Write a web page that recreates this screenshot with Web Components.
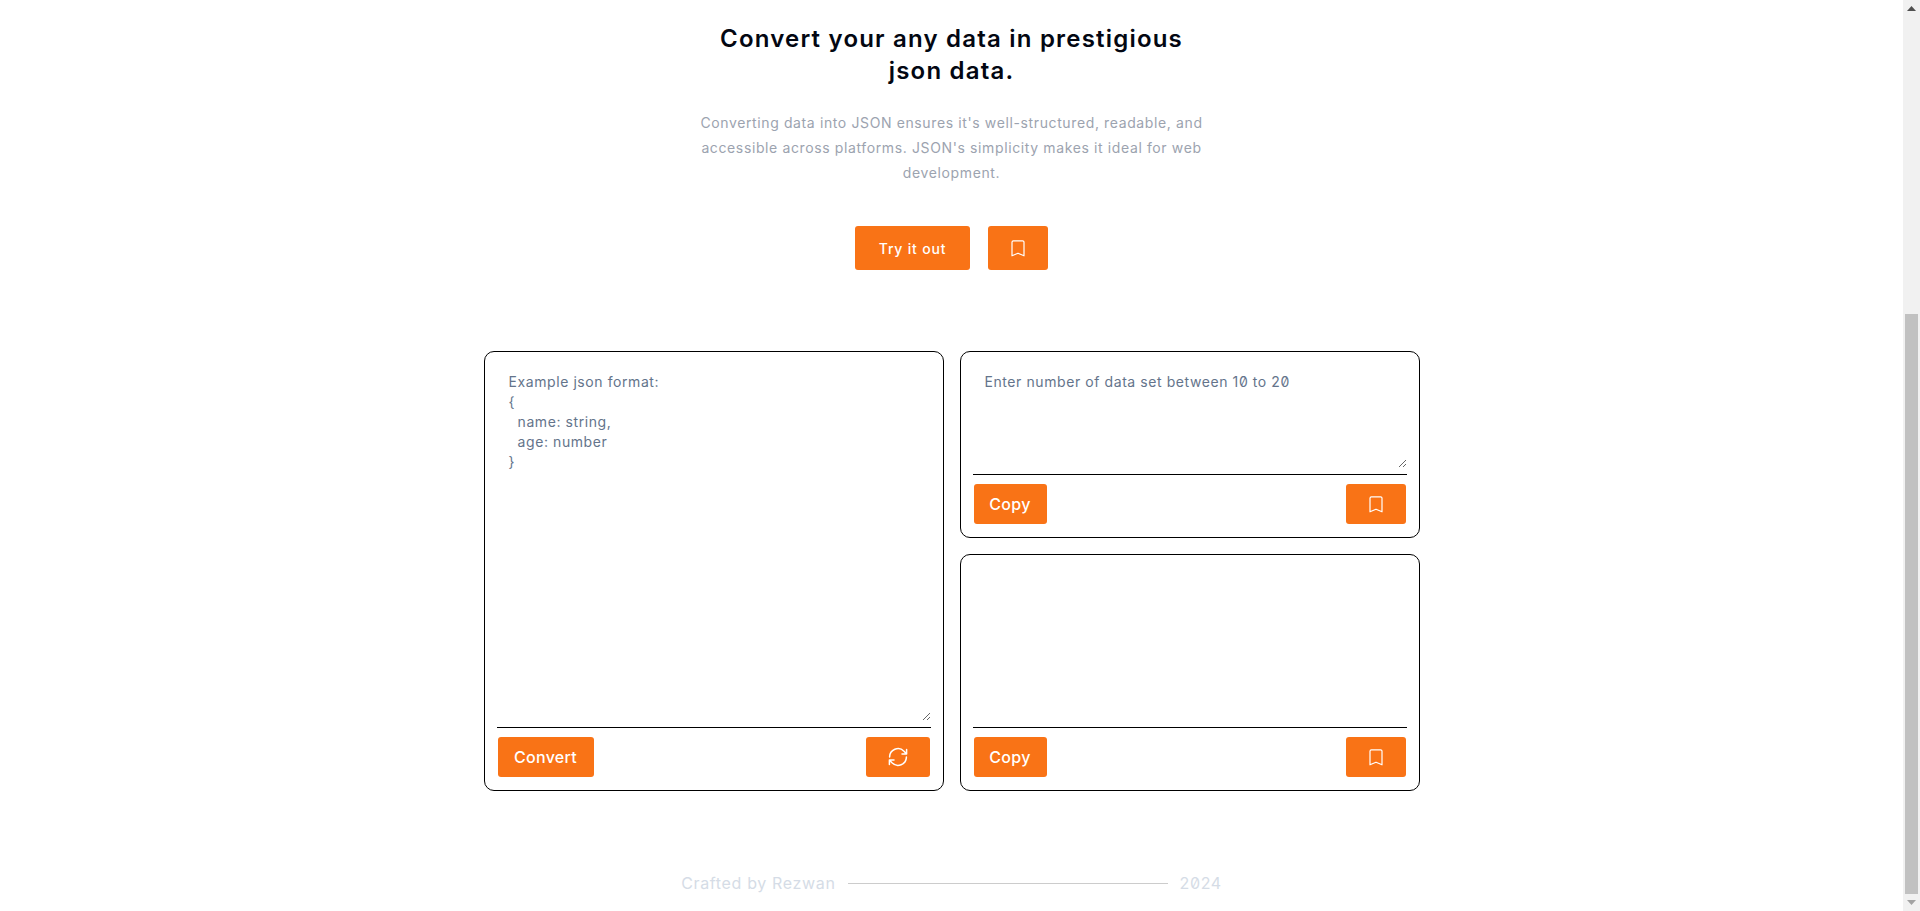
<!DOCTYPE html>
<html lang="en">
<head>
<meta charset="utf-8">
<title>JSON converter</title>
<style>
  html, body { margin: 0; height: 100%; overflow: hidden; background: #fff; }
  body { font-family: Inter, "Liberation Sans", sans-serif; font-feature-settings: "zero"; }
</style>
</head>
<body>
<app-shell>
  <hero-block>
    <span slot="title">Convert your any data in prestigious<br>json data.</span>
    <span slot="text">Converting data into JSON ensures it's well-structured, readable, and<br>accessible across platforms. JSON's simplicity makes it ideal for web<br>development.</span>
  </hero-block>
  <editor-grid>
    <editor-card class="big" text="Example json format:
{
  name: string,
  age: number
}">
      <app-button w="96" size="16">Convert</app-button>
      <app-button w="64" slot="end"><sync-icon></sync-icon></app-button>
    </editor-card>
    <editor-card class="small" text="Enter number of data set between 10 to 20">
      <app-button w="73" size="16">Copy</app-button>
      <app-button w="60" slot="end"><bookmark-icon></bookmark-icon></app-button>
    </editor-card>
    <editor-card class="medium" text="" readonly>
      <app-button w="73" size="16">Copy</app-button>
      <app-button w="60" slot="end"><bookmark-icon></bookmark-icon></app-button>
    </editor-card>
  </editor-grid>
  <site-footer></site-footer>
</app-shell>

<script>
function shadow(el, html) {
  el.attachShadow({ mode: 'open' }).innerHTML = html;
}

class AppShell extends HTMLElement {
  constructor() {
    super();
    shadow(this, `
<style>
  :host { display: flex; height: 911px; overflow: hidden; }
  main { flex: 1; min-width: 0; padding-top: 23px; }
  .track { width: 17px; background: #f1f1f1; display: flex; flex-direction: column; align-items: center; }
  .arrow { height: 17px; display: flex; align-items: center; justify-content: center; }
  .space { height: 297px; }
  .thumb { width: 13px; height: 580px; background: #c1c1c1; }
</style>
<main><slot></slot></main>
<div class="track">
  <div class="arrow"><svg width="9" height="5" viewBox="0 0 9 5"><path d="M4.5 0 9 5H0z" fill="#505050"/></svg></div>
  <div class="space"></div>
  <div class="thumb"></div>
  <div class="arrow"><svg width="9" height="5" viewBox="0 0 9 5"><path d="M0 0h9L4.5 5z" fill="#a3a3a3"/></svg></div>
</div>`);
  }
}

class HeroBlock extends HTMLElement {
  constructor() {
    super();
    shadow(this, `
<style>
  :host { display: block; text-align: center; }
  h1 { margin: 0; font-size: 24px; line-height: 32px; font-weight: 600; color: #030712; letter-spacing: 1.2px; }
  p { margin: 23px 0 0; font-size: 14px; line-height: 25px; color: #9ca3af; letter-spacing: .62px; }
  .actions { display: flex; justify-content: center; gap: 18px; margin-top: 41px; }
</style>
<h1><slot name="title"></slot></h1>
<p><slot name="text"></slot></p>
<div class="actions">
  <app-button w="115" h="44" size="14" wide>Try it out</app-button>
  <app-button w="60" h="44"><bookmark-icon></bookmark-icon></app-button>
</div>`);
  }
}

class AppButton extends HTMLElement {
  constructor() {
    super();
    const w = this.getAttribute('w') || 64;
    const h = this.getAttribute('h') || 40;
    const size = this.getAttribute('size') || 14;
    const spacing = this.hasAttribute('wide') ? .8 : .3;
    shadow(this, `
<style>
  :host { display: inline-flex; align-items: center; justify-content: center; box-sizing: border-box;
    width: ${w}px; height: ${h}px; background: #f97316; color: #fff; border-radius: 3px;
    font-size: ${size}px; font-weight: 500; letter-spacing: ${spacing}px; cursor: pointer; }
</style>
<slot></slot>`);
  }
}

class BookmarkIcon extends HTMLElement {
  constructor() {
    super();
    shadow(this, `
<style>:host { display: block; width: 14px; height: 17px; }</style>
<svg width="14" height="17" viewBox="0 0 14 17" fill="none" stroke="#fff" stroke-width="1.2" stroke-linejoin="round">
  <path d="M1 2.2A1.4 1.4 0 0 1 2.4.8h9.2A1.4 1.4 0 0 1 13 2.2v13.6l-6-2.6-6 2.6z"/>
</svg>`);
  }
}

class SyncIcon extends HTMLElement {
  constructor() {
    super();
    shadow(this, `
<style>:host { display: block; width: 20px; height: 20px; }</style>
<svg width="20" height="20" viewBox="0 0 20 20" fill="none" stroke="#fff" stroke-width="1.5" stroke-linecap="round" stroke-linejoin="round">
  <path d="M1.6 10A8.4 8.4 0 0 1 16 4.2L18.6 7M18.6 2.5V7H14"/>
  <path d="M18.4 10A8.4 8.4 0 0 1 4 15.8L1.4 13M1.4 17.5V13H6"/>
</svg>`);
  }
}

class EditorGrid extends HTMLElement {
  constructor() {
    super();
    shadow(this, `
<style>
  :host { display: grid; width: 936px; margin: 81px auto 0; gap: 16px;
    grid-template-columns: 460px 460px; grid-template-rows: 187px 237px; }
  ::slotted(.big) { grid-row: 1 / 3; }
</style>
<slot></slot>`);
  }
}

class EditorCard extends HTMLElement {
  constructor() {
    super();
    shadow(this, `
<style>
  :host { display: flex; flex-direction: column; box-sizing: border-box; padding: 12px;
    border: 1px solid #000; border-radius: 10px; min-height: 0; }
  .field { flex: 1; min-height: 0; border-bottom: 1px solid #000; padding-bottom: 6px; display: flex; }
  .input { flex: 1; box-sizing: border-box; padding: 8px 12px; resize: vertical; overflow: auto;
    font-size: 14px; line-height: 20px; color: #64748b; white-space: pre-wrap; letter-spacing: .58px; }
  :host([readonly]) .input { resize: none; }
  .bar { display: flex; justify-content: space-between; padding: 9px 1px 1px; }
</style>
<div class="field"><div class="input" id="input"></div></div>
<div class="bar"><slot></slot><slot name="end"></slot></div>`);
  }

  connectedCallback() {
    this.shadowRoot.getElementById('input').textContent = this.getAttribute('text');
  }
}

class SiteFooter extends HTMLElement {
  constructor() {
    super();
    shadow(this, `
<style>
  :host { display: flex; align-items: center; justify-content: center; gap: 12px; margin-top: 80px;
    font-size: 16px; line-height: 24px; color: #d5dce6; letter-spacing: .65px; }
  i { display: block; width: 320px; height: 1px; background: #ccc; }
</style>
<span>Crafted by Rezwan</span><i></i><span>2024</span>`);
  }
}

customElements.define('app-shell', AppShell);
customElements.define('app-button', AppButton);
customElements.define('bookmark-icon', BookmarkIcon);
customElements.define('sync-icon', SyncIcon);
customElements.define('hero-block', HeroBlock);
customElements.define('editor-grid', EditorGrid);
customElements.define('editor-card', EditorCard);
customElements.define('site-footer', SiteFooter);
</script>
</body>
</html>
